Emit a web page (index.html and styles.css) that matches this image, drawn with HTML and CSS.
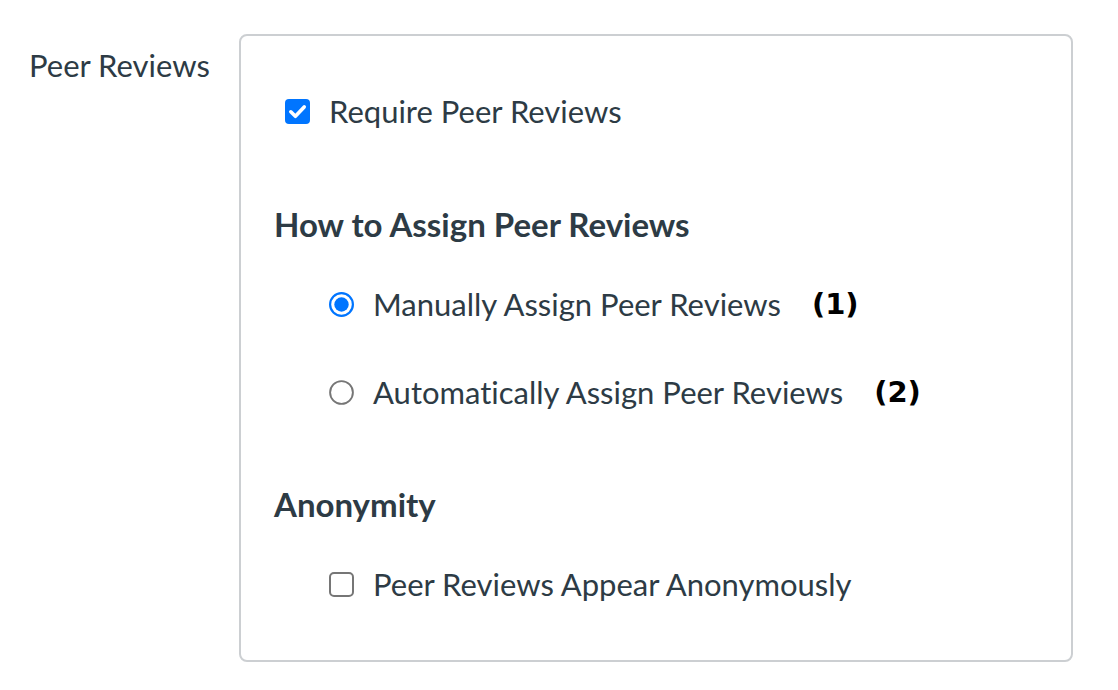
FILE: index.html
```html
<!DOCTYPE html>
<html>
<head>
<meta charset="utf-8">
<link rel="stylesheet" href="styles.css">
</head>
<body>
<div class="page">
  <div class="field-label">Peer Reviews</div>
  <div class="box">
    <div class="row row-main">
      <svg class="ctl" viewBox="0 0 25 25" width="25" height="25"><rect x="0" y="0" width="25" height="25" rx="4" fill="#0075ff"/><path d="M5.8 12.8 L10.4 17.3 L19.2 7.9" fill="none" stroke="#fff" stroke-width="3.6" stroke-linecap="round" stroke-linejoin="round"/></svg>
      <span>Require Peer Reviews</span>
    </div>
    <h3 class="heading heading-assign">How to Assign Peer Reviews</h3>
    <div class="row row-sub row-radio1">
      <svg class="ctl" viewBox="0 0 25 25" width="25" height="25"><circle cx="12.5" cy="12.5" r="11.4" fill="#fff" stroke="#0075ff" stroke-width="2.2"/><circle cx="12.5" cy="12.5" r="7.2" fill="#0075ff"/></svg>
      <span>Manually Assign Peer Reviews</span>
      <b class="num">(1)</b>
    </div>
    <div class="row row-sub row-radio2">
      <svg class="ctl" viewBox="0 0 25 25" width="25" height="25"><circle cx="12.5" cy="12.5" r="11.4" fill="#fff" stroke="#767676" stroke-width="1.9"/></svg>
      <span>Automatically Assign Peer Reviews</span>
      <b class="num">(2)</b>
    </div>
    <h3 class="heading heading-anon">Anonymity</h3>
    <div class="row row-sub row-anon">
      <svg class="ctl" viewBox="0 0 25 25" width="25" height="25"><rect x="1" y="1" width="23" height="23" rx="4" fill="#fff" stroke="#767676" stroke-width="2"/></svg>
      <span>Peer Reviews Appear Anonymously</span>
    </div>
  </div>
</div>
</body>
</html>
```
FILE: styles.css
```css
html, body {
  margin: 0;
  padding: 0;
  background: #fff;
}
body {
  font-family: Lato, "Noto Sans", sans-serif;
  font-size: 31px;
  color: #2d3b45;
  font-variant-ligatures: none;
}
.page {
  display: flex;
  align-items: flex-start;
  padding: 34px 0 0 29px;
}
.field-label {
  width: 210px;
  line-height: 44px;
  margin-top: 9px;
}
.box {
  width: 797px;
  height: 624px;
  border: 2px solid #cccfd2;
  border-radius: 8px;
  box-sizing: content-box;
  padding: 0 0 0 33px;
  display: flex;
  flex-direction: column;
  align-items: flex-start;
}
.row {
  display: flex;
  align-items: center;
  height: 44px;
  line-height: 44px;
}
.ctl {
  flex: none;
  display: block;
  margin-right: 19px;
}
.row-main {
  margin-top: 53px;
  margin-left: 11px;
}
.row-sub {
  margin-left: 55px;
}
.heading {
  margin: 0;
  font-size: 33px;
  font-weight: 700;
  line-height: 44px;
}
.heading-assign { margin-top: 69px; }
.row-radio1 { margin-top: 36px; }
.row-radio2 { margin-top: 44px; }
.heading-anon { margin-top: 68px; }
.row-anon { margin-top: 36px; }
.num {
  font-family: "DejaVu Sans", sans-serif;
  font-weight: 700;
  font-size: 29px;
  color: #000;
  margin-left: 31px;
}
```
